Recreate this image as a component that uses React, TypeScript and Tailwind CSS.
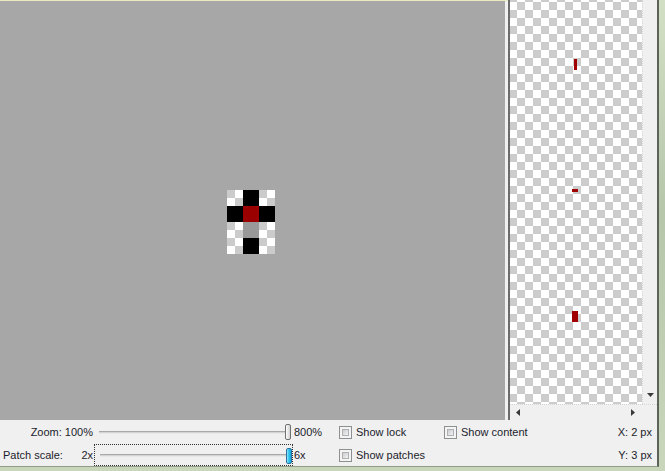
const Checkbox = ({ label }: { label: string }) => (
  <label className="flex items-center gap-[4px]">
    <span className="w-[13px] h-[13px] border border-[#8e8f8f] bg-[#f4f4f4] p-[2px]">
      <span className="block w-full h-full border border-[#aeb0b3] bg-[linear-gradient(135deg,#cbcdd0,#f2f2f2)]" />
    </span>
    <span>{label}</span>
  </label>
);

const Slider = ({ active }: { active?: boolean }) => (
  <div className="relative w-full h-full flex items-center pl-[5px] pr-[3px]">
    <div className="w-full h-[3px] border-t border-t-[#a9a9a9] border-b border-b-[#e8e8e8] bg-[#d4d4d4]" />
    {active ? (
      <div className="absolute left-[191px] top-[3px] w-[6px] h-[16px] rounded-[2px] border border-[#2c6f9c] bg-[linear-gradient(90deg,#9be6fb,#27c0ee_50%,#1aa9dd)]" />
    ) : (
      <div className="absolute left-[191px] top-[4px] w-[6px] h-[16px] rounded-[2px] border border-[#707070] bg-[linear-gradient(90deg,#ffffff,#e6e6e6_50%,#d2d2d2)]" />
    )}
  </div>
);

export default function App() {
  return (
    <div className="w-[665px] h-[471px] overflow-hidden bg-[linear-gradient(180deg,#d3dfc5,#b5c6ab_45%,#c9d6bb)] font-['Liberation_Sans',Arial,sans-serif] text-[11px] text-[#1c1c2c]">
      <div className="w-[659px] h-[467px] flex flex-col border-r-2 border-b border-r-[#5c6459] border-b-[#8f9c88] bg-[#f0f0f0]">
        {/* editor + preview */}
        <div className="h-[420px] flex">
          <div className="w-[505px] border-t border-t-[#e9e9c2] bg-[#a7a7a7] pl-[227px] pt-[189px]">
            <svg width="48" height="64" viewBox="0 0 48 64" shapeRendering="crispEdges">
              <defs>
                <pattern id="ck" width="16" height="16" patternUnits="userSpaceOnUse">
                  <rect width="16" height="16" fill="#fff" />
                  <rect width="8" height="8" fill="#cbcbcb" />
                  <rect x="8" y="8" width="8" height="8" fill="#cbcbcb" />
                </pattern>
              </defs>
              <rect width="48" height="64" fill="url(#ck)" />
              <rect x="16" y="0" width="16" height="16" fill="#000" />
              <rect x="0" y="16" width="48" height="16" fill="#000" />
              <rect x="16" y="16" width="16" height="16" fill="#9b0000" />
              <rect x="16" y="32" width="16" height="16" fill="#999" />
              <rect x="16" y="48" width="16" height="16" fill="#000" />
            </svg>
          </div>
          <div className="w-[3px] border-t border-t-[#e9e9c2] bg-[#f0f0f0]" />
          <div className="flex-1 flex flex-col border-l-2 border-l-[#6b6b6b]">
            <div className="h-[404px] flex">
              {/* preview */}
              <div className="relative w-[132px] bg-[conic-gradient(#cccccc_25%,#ffffff_0_50%,#cccccc_0_75%,#ffffff_0)] bg-[length:16px_16px] bg-[position:-1px_2px]">
                <div className="absolute left-[64px] top-[59px] w-[3px] h-[11px] bg-[#a00000]" />
                <div className="absolute left-[62px] top-[189px] w-[6px] h-[3px] bg-[#a00000]" />
                <div className="absolute left-[62px] top-[311px] w-[6px] h-[11px] bg-[#a00000]" />
              </div>
              {/* vertical scrollbar */}
              <div className="flex-1 flex flex-col justify-end items-center pb-[7px] border-l border-dotted border-l-[#d6d6d6] bg-[#f0f0f0]">
                <svg width="7" height="4" viewBox="0 0 7 4">
                  <polygon points="0,0 7,0 3.5,4" fill="#3a3a3a" />
                </svg>
              </div>
            </div>
            {/* horizontal scrollbar */}
            <div className="flex-1 flex border-t border-dotted border-t-[#d6d6d6]">
              <div className="w-[132px] flex items-center justify-between pl-[6px] pr-[7px]">
                <svg width="4" height="7" viewBox="0 0 4 7">
                  <polygon points="4,0 4,7 0,3.5" fill="#3a3a3a" />
                </svg>
                <svg width="4" height="7" viewBox="0 0 4 7">
                  <polygon points="0,0 0,7 4,3.5" fill="#3a3a3a" />
                </svg>
              </div>
              <div className="flex-1" />
            </div>
          </div>
        </div>

        {/* controls */}
        <div className="flex-1 flex flex-col">
          <div className="h-[24px] flex items-center">
            <div className="w-[94px] pr-[1px] text-right">Zoom: 100%</div>
            <div className="w-[199px] h-full">
              <Slider />
            </div>
            <div className="w-[46px] pl-[1px]">800%</div>
            <div className="w-[105px]">
              <Checkbox label="Show lock" />
            </div>
            <div className="flex-1">
              <Checkbox label="Show content" />
            </div>
            <div className="pr-[5px]">X: 2 px</div>
          </div>
          <div className="flex-1 flex items-center">
            <div className="w-[94px] flex justify-between pl-[3px] pr-[1px]">
              <span>Patch scale:</span>
              <span>2x</span>
            </div>
            <div className="w-[199px] h-full border border-dotted border-[#333]">
              <Slider active />
            </div>
            <div className="w-[46px] pl-[1px]">6x</div>
            <div className="flex-1">
              <Checkbox label="Show patches" />
            </div>
            <div className="pr-[5px]">Y: 3 px</div>
          </div>
        </div>
      </div>
    </div>
  );
}
